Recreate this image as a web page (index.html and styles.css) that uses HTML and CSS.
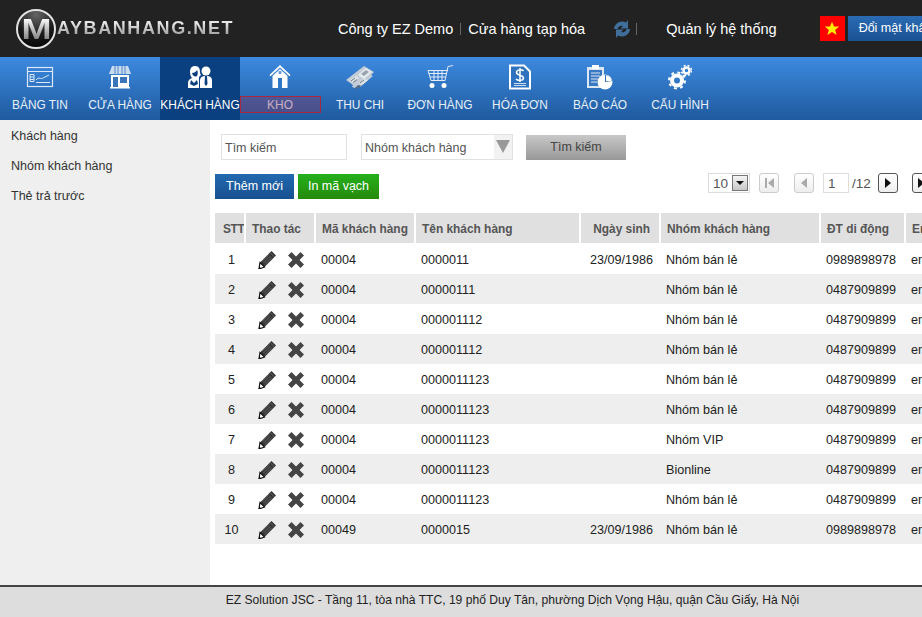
FILE: index.html
```html
<!DOCTYPE html>
<html>

<head>
   <meta charset="utf-8">
   <meta name="viewport" content="width=device-width, initial-scale=1.0">
   <title>Khách hàng</title>
   <link rel="stylesheet" href="styles.css">
</head>

<body>
   <header class="top-bar">
      <div class="logo">
         <span class="logo-mark"><span class="logo-m">M</span></span>
         <span class="logo-text">AYBANHANG.NET</span>
      </div>
      <div class="store-info">
         <span>Công ty EZ Demo</span>
         <span class="sep"></span>
         <span>Cửa hàng tạp hóa</span>
      </div>
      <svg class="sync-icon" width="18" height="20" viewBox="0 0 18 20">
         <path d="M1 10a8 8 0 0 1 12-6.500l2-2.500v8.500h-7.500l2.500-2.500a4 4 0 0 0-5.500 3z" fill="#3f6f9a" />
         <path d="M17 10a8 8 0 0 1-12 6.500l-2 2.500v-8.500h7.500l-2.500 2.500a4 4 0 0 0 5.500-3z" fill="#3f6f9a" />
      </svg>
      <span class="sep sep-sync"></span>
      <span class="system-link">Quản lý hệ thống</span>
      <span class="flag">
         <svg width="16" height="16" viewBox="0 0 20 20">
            <path d="M10 1l2.600 6h6.400l-5.100 4.100 1.900 6.500-5.800-3.700-5.800 3.700 1.900-6.500-5.100-4.100h6.400z" fill="#ffee00" />
         </svg>
      </span>
      <span class="password-btn">Đổi mật khẩu</span>
   </header>

   <nav class="main-nav">
      <a class="nav-item">
         <svg width="28" height="22" viewBox="0 0 28 22" fill="none" stroke="#dbe8f7">
            <rect x="1.500" y="1.500" width="25" height="19" stroke-width="1.200" />
            <path d="M2 5.500h24M4 8.500h4v7h-4zM4 11h4M4 13.500h4M10 16.500h14M10 14c3-4 5 0 7-2l6-3" stroke-width="1" />
         </svg>
         <span>BẢNG TIN</span>
      </a>
      <a class="nav-item">
         <svg width="24" height="24" viewBox="0 0 24 24">
            <path d="M4 1h16l3 8h-22z" fill="#c9dbef" />
            <path d="M7 1v8M10 1v8M14 1v8M17 1v8" stroke="#4f86c4" />
            <path d="M3 10h18v12h1v1.500h-20v-1.500h1z" fill="#fff" />
            <path d="M5 12h5v10h-5zM12 12h7v6h-7z" fill="#3a75ba" />
         </svg>
         <span>CỬA HÀNG</span>
      </a>
      <a class="nav-item active">
         <svg width="26" height="24" viewBox="0 0 26 24" fill="#fff">
            <circle cx="19" cy="6" r="4.500" />
            <path d="M13 23v-7c0-4 2-5 6-5s6 1 6 5v7z" />
            <path d="M18 11h2l.5 8-1.500 2-1.500-2z" fill="#0b4080" />
            <path d="M8 1c4 0 5 3 5 6 0 2 1 3 1 3l-2 2v11h-11v-5c0-3 2-4 4-5-1-1-2-3-2-6 0-4 2-6 5-6z" />
            <path d="M5 8c2 0 4-1 5-3 1 2 1 4 0 6-1 1-4 1-5-3zM4 15l3 3 3-3 1 4-4 2-4-2z" fill="#0b4080" />
         </svg>
         <span>KHÁCH HÀNG</span>
      </a>
      <a class="nav-item">
         <svg width="22" height="24" viewBox="0 0 22 24" fill="#fff">
            <path d="M11 0l10.500 10-1 1.200-9.500-8.700-9.500 8.700-1-1.200z" />
            <path d="M3.500 11l7.500-7 7.500 7v12h-15z" />
            <path d="M9 13h4v10h-4z" fill="#2f78c8" />
            <rect x="9.500" y="6" width="3" height="3" fill="#6ca0dc" />
         </svg>
         <span>KHO</span>
      </a>
      <a class="nav-item">
         <svg width="30" height="26" viewBox="0 0 30 26">
            <path d="M1 16l18-14 10 6-3 3 2 1-13 11-2-2-3 3-3-1 1-2z" fill="#c3ccd6" />
            <path d="M13 11l8-7 6 4-8 7z" fill="#e6ebf0" />
            <path d="M16 10l5-4 3 2-5 4z" fill="#97a3af" />
            <path d="M5 16l6-4 3 2-6 5z" fill="#e0e5ea" />
            <path d="M14 19l5-4 4 1-6 5z" fill="#e0e5ea" />
            <path d="M10 24l4-3 2 1-4 3z" fill="#5f6b78" />
            <path d="M6 17l4-3M8 18.500l4-3M15 19l4-3" stroke="#6b7785" />
         </svg>
         <span>THU CHI</span>
      </a>
      <a class="nav-item">
         <svg width="28" height="25" viewBox="0 0 28 25" fill="none" stroke="#e3ecf7">
            <path d="M27 1l-5 1-3 14h-14l-3-10h20M3 9h18M4 12.500h16M8 6v10M12 6v10M16 6v10" stroke-width="1" />
            <circle cx="6" cy="21" r="2.500" fill="#fff" stroke="none" />
            <circle cx="18" cy="21" r="2.500" fill="#fff" stroke="none" />
         </svg>
         <span>ĐƠN HÀNG</span>
      </a>
      <a class="nav-item">
         <svg width="22" height="25" viewBox="0 0 22 25">
            <path d="M1 1h14l6 6v17h-20z" fill="#2f72bf" stroke="#fff" stroke-width="2" />
            <path d="M5 19h12M5 21h12" stroke="#cfe0f3" />
            <path d="M14.500 6.500c-1-1.500-7-2-7 1.500 0 3.500 7 2 7 5.500 0 3-6 3-7.500 1M11 3.500v14" fill="none" stroke="#fff" stroke-width="1.500" />
         </svg>
         <span>HÓA ĐƠN</span>
      </a>
      <a class="nav-item">
         <svg width="28" height="26" viewBox="0 0 28 26">
            <path d="M1 3h17v21h-17z" fill="#dbe7f5" />
            <path d="M3 6h13v16h-13z" fill="#3a78c2" />
            <path d="M6 1h7v4h-7z" fill="#fff" />
            <path d="M5 9h9M5 12h9M5 15h7M5 18h6" stroke="#dbe7f5" />
            <circle cx="19" cy="18" r="7.500" fill="#fff" />
            <path d="M19 18v-7a7 7 0 0 1 7 6z" fill="#2f6db6" />
            <path d="M20 11.500a6 6 0 0 1 5.500 5.500h-5.500z" fill="#fff" />
         </svg>
         <span>BÁO CÁO</span>
      </a>
      <a class="nav-item">
         <svg width="24" height="25" viewBox="0 0 24 25" fill="none" stroke="#fff">
            <circle cx="9" cy="16" r="5" stroke-width="4" />
            <circle cx="9" cy="16" r="8" stroke-width="2" stroke-dasharray="3 3.300" />
            <circle cx="18.500" cy="6" r="3" stroke-width="2.500" />
            <circle cx="18.500" cy="6" r="5" stroke-width="1.500" stroke-dasharray="2 2" />
         </svg>
         <span>CẤU HÌNH</span>
      </a>
      <span class="hover-mark"></span>
   </nav>

   <div class="page">
      <aside class="sidebar">
         <a>Khách hàng</a>
         <a>Nhóm khách hàng</a>
         <a>Thẻ trả trước</a>
      </aside>

      <main class="content">
         <form class="search-row">
            <div class="field field-search">Tìm kiếm</div>
            <div class="field field-group">
               <span>Nhóm khách hàng</span>
               <span class="field-arrow"></span>
            </div>
            <div class="search-btn">Tìm kiếm</div>
         </form>

         <div class="toolbar">
            <div class="actions">
               <a class="btn btn-blue">Thêm mới</a>
               <a class="btn btn-green">In mã vạch</a>
            </div>
            <div class="pager">
               <div class="page-size">10<span class="page-size-btn"></span></div>
               <span class="pg-btn off pg-first"><i class="bar"></i><i class="tri-left"></i></span>
               <span class="pg-btn off pg-prev"><i class="tri-left"></i></span>
               <div class="pg-input">1</div>
               <span class="pg-total">/12</span>
               <span class="pg-btn pg-next"><i class="tri-right"></i></span>
               <span class="pg-btn pg-last"><i class="tri-right"></i><i class="bar"></i></span>
            </div>
         </div>

         <table class="grid">
            <thead>
               <tr>
                  <th class="c-stt">STT</th>
                  <th class="c-act">Thao tác</th>
                  <th class="c-code">Mã khách hàng</th>
                  <th class="c-name">Tên khách hàng</th>
                  <th class="c-date">Ngày sinh</th>
                  <th class="c-group">Nhóm khách hàng</th>
                  <th class="c-phone">ĐT di động</th>
                  <th class="c-mail">Email</th>
               </tr>
            </thead>
            <tbody id="rows"></tbody>
         </table>
      </main>
   </div>

   <footer class="site-footer">EZ Solution JSC - Tầng 11, tòa nhà TTC, 19 phố Duy Tân, phường Dịch Vọng Hậu, quận Cầu Giấy, Hà Nội</footer>

   <script>
      const customers = [
         ["00004", "0000011", "23/09/1986", "Nhóm bán lẻ", "0989898978"],
         ["00004", "00000111", "", "Nhóm bán lẻ", "0487909899"],
         ["00004", "000001112", "", "Nhóm bán lẻ", "0487909899"],
         ["00004", "000001112", "", "Nhóm bán lẻ", "0487909899"],
         ["00004", "0000011123", "", "Nhóm bán lẻ", "0487909899"],
         ["00004", "0000011123", "", "Nhóm bán lẻ", "0487909899"],
         ["00004", "0000011123", "", "Nhóm VIP", "0487909899"],
         ["00004", "0000011123", "", "Bionline", "0487909899"],
         ["00004", "0000011123", "", "Nhóm bán lẻ", "0487909899"],
         ["00049", "0000015", "23/09/1986", "Nhóm bán lẻ", "0989898978"]
      ];

      const pencil = `<svg width="18" height="18" viewBox="0 0 18 18"><path d="M13.500 0l4.500 4.500-11.500 11.500-4.500-4.500z" fill="#333"/><path d="M4 10.500l7-7M5.500 12l7-7M7 13.500l7-7M12 1.500l4.500 4.500" stroke="#808080" stroke-width=".7"/><path d="M2 11.500l4.500 4.500-5.500 2z" fill="#fff" stroke="#111" stroke-width="1.200"/><path d="M.5 18l.8-2.500 1.700 1.700z" fill="#111"/></svg>`;
      const cross = `<svg width="16" height="16" viewBox="0 0 16 16"><path d="M3.500 0l4.500 4.500 4.500-4.500 3.500 3.500-4.500 4.500 4.500 4.500-3.500 3.500-4.500-4.500-4.500 4.500-3.500-3.500 4.500-4.500-4.500-4.500z" fill="#444"/></svg>`;

      // Fill the table body
      document.getElementById("rows").innerHTML = customers.map((c, i) => `
         <tr>
            <td class="num">${i + 1}</td>
            <td class="ops">${pencil}${cross}</td>
            <td>${c[0]}</td>
            <td>${c[1]}</td>
            <td class="date">${c[2]}</td>
            <td>${c[3]}</td>
            <td>${c[4]}</td>
            <td>email@ez.vn</td>
         </tr>`).join("");
   </script>
</body>

</html>
```

FILE: styles.css
```css
html,
body {
   margin: 0;
   height: 617px;
   overflow: hidden;
}

body {
   font-family: "Liberation Sans", Arial, sans-serif;
   font-size: 12.500px;
   color: #222;
   background-color: #fff;
}

/* Top bar */
.top-bar {
   display: flex;
   align-items: center;
   height: 57px;
   background-color: #222;
   color: #fff;
   white-space: nowrap;
   overflow: hidden;
}

.top-bar > * {
   flex-shrink: 0;
}

.logo {
   display: flex;
   align-items: center;
   width: 338px;
   padding-left: 16px;
   box-sizing: border-box;
}

.logo-mark {
   display: flex;
   align-items: center;
   justify-content: center;
   width: 36px;
   height: 36px;
   border: 2px solid #e2e2e2;
   border-radius: 50%;
   background: radial-gradient(circle at 50% 10%, #666 0, #1a1a1a 55%, #000 100%);
   overflow: hidden;
}

.logo-m {
   font-size: 30px;
   font-weight: bold;
   line-height: 36px;
   background: linear-gradient(#fff 20%, #777 85%);
   -webkit-background-clip: text;
   background-clip: text;
   color: transparent;
   transform: scaleX(1.200);
}

.logo-text {
   margin-left: 1px;
   font-size: 18px;
   font-weight: bold;
   letter-spacing: 1.600px;
   background: linear-gradient(#e6e6e6 25%, #a0a0a0 80%);
   -webkit-background-clip: text;
   background-clip: text;
   color: transparent;
}

.store-info {
   display: flex;
   align-items: center;
   font-size: 14.500px;
}

.sep {
   width: 1px;
   height: 12px;
   margin: 0 7px;
   background-color: #666;
}

.sync-icon {
   margin-left: 28px;
}

.sep-sync {
   margin: 0 0 0 5px;
}

.system-link {
   margin-left: 29px;
   font-size: 14.500px;
}

.flag {
   display: flex;
   align-items: center;
   justify-content: center;
   width: 25px;
   height: 25px;
   margin-left: 43px;
   background-color: #f00;
}

.password-btn {
   height: 25px;
   margin-left: 3px;
   padding: 0 11px;
   line-height: 25px;
   background: linear-gradient(#2a6bb3, #1a5294);
}

/* Main menu */
.main-nav {
   position: relative;
   display: flex;
   height: 63px;
   background: linear-gradient(#3d8ae0, #1f5a9e);
}

.nav-item {
   display: flex;
   flex-direction: column;
   align-items: center;
   width: 80px;
   color: #e6eff9;
   font-size: 11.900px;
   white-space: nowrap;
}

.nav-item svg {
   height: 26px;
   margin-top: 7px;
}

.nav-item span {
   margin-top: 8px;
}

.nav-item.active {
   background-color: #0b4080;
   color: #fff;
}

.hover-mark {
   position: absolute;
   left: 240px;
   top: 39px;
   width: 79px;
   height: 15px;
   border: 1px solid #a8283f;
   background-color: rgba(150, 50, 90, .35);
}

/* Page body */
.page {
   display: flex;
   height: 465px;
}

.sidebar {
   display: flex;
   flex-direction: column;
   width: 210px;
   flex-shrink: 0;
   padding: 1px 0 0 11px;
   box-sizing: border-box;
   background-color: #efefef;
   color: #333;
}

.sidebar a {
   height: 30px;
   line-height: 30px;
}

.content {
   flex: 1;
   min-width: 0;
   padding: 14px 0 0 5px;
   overflow: hidden;
}

/* Search */
.search-row {
   display: flex;
   align-items: center;
   margin: 0 0 0 6px;
   color: #555;
}

.field {
   height: 26px;
   line-height: 26px;
   border: 1px solid #e2e2e2;
   box-sizing: border-box;
   padding-left: 3px;
}

.field-search {
   width: 126px;
}

.field-group {
   display: flex;
   justify-content: space-between;
   width: 152px;
   margin-left: 14px;
   padding-right: 0;
}

.field-arrow {
   position: relative;
   width: 18px;
   height: 24px;
   background-color: #f2f2f2;
}

.field-arrow::after {
   content: "";
   position: absolute;
   left: 2px;
   top: 5px;
   border-left: 7px solid transparent;
   border-right: 7px solid transparent;
   border-top: 13px solid #999;
}

.search-btn {
   width: 100px;
   height: 25px;
   margin-left: 13px;
   line-height: 25px;
   text-align: center;
   background: linear-gradient(#c8c8c8, #989898);
   color: #444;
}

/* Toolbar and pager */
.toolbar {
   display: flex;
   justify-content: space-between;
   align-items: flex-start;
   width: 717px;
   margin-top: 13px;
   height: 40px;
}

.actions {
   display: flex;
   gap: 4px;
   margin-top: 1px;
}

.btn {
   height: 25px;
   line-height: 25px;
   text-align: center;
   color: #fff;
}

.btn-blue {
   width: 79px;
   background: linear-gradient(#2268b0, #17508f);
}

.btn-green {
   width: 81px;
   background: linear-gradient(#25b01c, #268a0a);
}

.pager {
   display: flex;
   align-items: center;
   height: 20px;
   color: #555;
   font-size: 13.500px;
}

.page-size {
   display: flex;
   align-items: center;
   justify-content: space-between;
   width: 42px;
   height: 20px;
   padding: 0 1px 0 4px;
   box-sizing: border-box;
   border: 1px solid #ddd;
}

.page-size-btn {
   position: relative;
   width: 16px;
   height: 16px;
   border: 1px solid #777;
   box-sizing: border-box;
   background: linear-gradient(#f4f4f4, #c8c8c8);
}

.page-size-btn::after {
   content: "";
   position: absolute;
   left: 3px;
   top: 5px;
   border-left: 4px solid transparent;
   border-right: 4px solid transparent;
   border-top: 4px solid #111;
}

.pg-btn {
   display: flex;
   align-items: center;
   justify-content: center;
   gap: 1px;
   width: 20px;
   height: 20px;
   box-sizing: border-box;
   border: 1px solid #555;
   border-radius: 3px;
   background: linear-gradient(#fff, #eee);
   flex-shrink: 0;
}

.pg-btn.off {
   border-color: #ccc;
}

.pg-first {
   margin-left: 9px;
}

.pg-prev {
   margin-left: 15px;
}

.pg-next {
   margin-left: 8px;
}

.pg-last {
   margin-left: 14px;
}

.tri-left {
   border-top: 5px solid transparent;
   border-bottom: 5px solid transparent;
   border-right: 6px solid #aaa;
}

.tri-right {
   border-top: 5px solid transparent;
   border-bottom: 5px solid transparent;
   border-left: 6px solid #111;
}

.bar {
   width: 2px;
   height: 10px;
   background-color: #aaa;
}

.pg-last .bar {
   background-color: #111;
}

.pg-input {
   width: 26px;
   height: 20px;
   margin-left: 9px;
   padding-left: 4px;
   line-height: 20px;
   box-sizing: border-box;
   border: 1px solid #ddd;
}

.pg-total {
   margin-left: 3px;
   width: 18px;
}

/* Table */
.grid {
   width: 840px;
   table-layout: fixed;
   border-collapse: separate;
   border-spacing: 0;
}

.grid th {
   height: 31px;
   padding: 1px 0 0 6px;
   box-sizing: border-box;
   background-color: #e0e0e0;
   background-clip: padding-box;
   border-right: 2px solid #fff;
   border-bottom: 1px solid #fff;
   color: #555;
   font-size: 11.900px;
   text-align: left;
   white-space: nowrap;
   overflow: hidden;
}

.grid .c-stt {
   width: 31px;
   padding-left: 8px;
   letter-spacing: -.4px;
}

.grid .c-act {
   width: 70px;
}

.grid .c-code {
   width: 100px;
}

.grid .c-name {
   width: 165px;
}

.grid .c-date {
   width: 80px;
   padding: 1px 9px 0 0;
   text-align: right;
}

.grid .c-group {
   width: 160px;
}

.grid .c-phone {
   width: 85px;
}

.grid .c-mail {
   width: 150px;
}

.grid td {
   height: 30px;
   padding: 2px 0 0 5px;
   box-sizing: border-box;
   color: #222;
   font-size: 12.600px;
   white-space: nowrap;
   overflow: hidden;
}

.grid tbody tr:nth-child(even) td {
   background-color: #eee;
}

.grid td.num {
   padding: 2px 0 0 2px;
   text-align: center;
}

.grid td.date {
   padding: 2px 8px 0 0;
   text-align: right;
}

.grid td.ops svg {
   display: inline-block;
   vertical-align: middle;
}

.grid td.ops {
   padding-left: 12px;
}

.grid td.ops svg + svg {
   margin-left: 12px;
}

/* Footer */
.site-footer {
   height: 32px;
   padding-left: 103px;
   box-sizing: border-box;
   border-top: 2px solid #444;
   background-color: #ddd;
   font-size: 12.100px;
   line-height: 26px;
   text-align: center;
   color: #222;
   white-space: nowrap;
}
```
